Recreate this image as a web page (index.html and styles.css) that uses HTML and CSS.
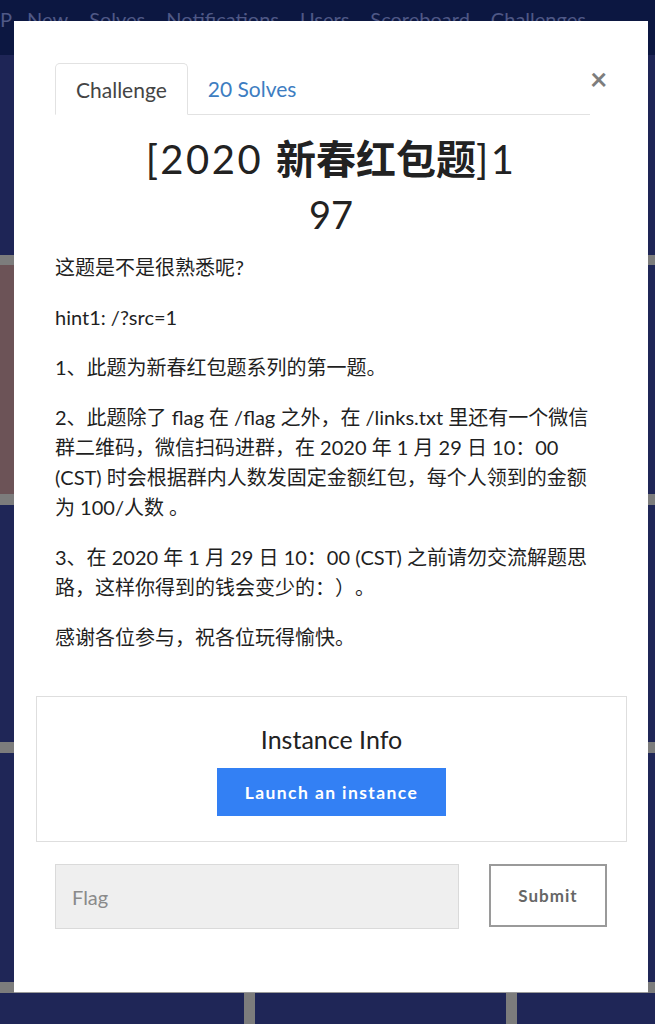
FILE: index.html
```html
<!DOCTYPE html>
<html lang="zh-CN">
<head>
<meta charset="utf-8">
<title>Challenge</title>
<link rel="stylesheet" href="styles.css">
</head>
<body>
<div class="page">
  <nav class="topnav">
    <span class="brand">P</span>
    <span class="nav-item">New</span>
    <span class="nav-item">Solves</span>
    <span class="nav-item">Notifications</span>
    <span class="nav-item">Users</span>
    <span class="nav-item">Scoreboard</span>
    <span class="nav-item">Challenges</span>
  </nav>
  <div class="hero"></div>
  <div class="cards">
    <div class="card card-solved"></div>
    <div class="card"></div>
    <div class="card"></div>
    <div class="card"></div>
    <div class="card"></div>
    <div class="card"></div>
    <div class="card"></div>
    <div class="card"></div>
    <div class="card"></div>
    <div class="card"></div>
    <div class="card"></div>
    <div class="card"></div>
  </div>
</div>

<div class="modal">
  <div class="modal-head">
    <ul class="tabs">
      <li class="tab tab-active">Challenge</li>
      <li class="tab tab-link">20 Solves</li>
    </ul>
    <span class="close">×</span>
  </div>
  <h2 class="challenge-name">[2020 <span class="cjk-bold">新春红包题</span>]1</h2>
  <h3 class="challenge-value">97</h3>
  <div class="desc">
    <p>这题是不是很熟悉呢?</p>
    <p>hint1: /?src=1</p>
    <p>1、此题为新春红包题系列的第一题。</p>
    <p>2、此题除了 flag 在 /flag 之外，在 /links.txt 里还有一个微信群二维码，微信扫码进群，在 2020 年 1 月 29 日 10：00 (CST) 时会根据群内人数发固定金额红包，每个人领到的金额为 100/人数 。</p>
    <p>3、在 2020 年 1 月 29 日 10：00 (CST) 之前请勿交流解题思路，这样你得到的钱会变少的：）。</p>
    <p>感谢各位参与，祝各位玩得愉快。</p>
  </div>
  <div class="instance">
    <div class="instance-title">Instance Info</div>
    <button class="launch">Launch an instance</button>
  </div>
  <div class="flag-row">
    <input class="flag-input" type="text" placeholder="Flag">
    <button class="submit">Submit</button>
  </div>
</div>
</body>
</html>
```

FILE: styles.css
```css
html, body {
  margin: 0;
  padding: 0;
}
body {
  width: 655px;
  height: 1024px;
  overflow: hidden;
  position: relative;
  background: #1e2556;
  font-family: "Lato", "Noto Sans CJK SC", sans-serif;
}
.page {
  width: 655px;
  overflow: hidden;
}
.topnav {
  height: 55px;
  background: #0c1741;
  display: flex;
  align-items: flex-start;
  gap: 21px;
  padding-top: 5px;
  box-sizing: border-box;
  font-size: 20px;
  line-height: 28px;
  color: #4f5886;
  white-space: nowrap;
}
.brand {
  margin-right: -6px;
}
.hero {
  height: 200px;
  background: #1e2556;
}
.cards {
  display: grid;
  grid-template-columns: 244px 251px 1fr;
  grid-template-rows: 229px 237px 229px 60px;
  gap: 11px;
  padding-top: 10px;
  background: #7c7c7c;
}
.card {
  background: #1f2657;
}
.card-solved {
  background: #6c5357;
}

.modal {
  position: absolute;
  left: 14px;
  top: 21px;
  width: 634px;
  height: 971px;
  box-sizing: border-box;
  background: #fff;
  padding: 42px 41px 0 41px;
  box-shadow: 0 1px 0 #9a9a9a;
  color: #222;
}
.modal-head {
  display: flex;
  align-items: flex-start;
}
.tabs {
  list-style: none;
  margin: 0;
  padding: 0;
  display: flex;
  width: 535px;
  height: 52px;
  border-bottom: 1px solid #e2e2e2;
  box-sizing: border-box;
}
.tab {
  padding: 0 20px;
  font-size: 21px;
  line-height: 51px;
  height: 52px;
  box-sizing: border-box;
}
.tab-active {
  color: #444;
  border: 1px solid #e2e2e2;
  border-bottom-color: #fff;
  border-radius: 5px 5px 0 0;
  padding: 0 20px;
  background: #fff;
}
.tab-link {
  color: #3d7dc1;
}
.close {
  width: 17px;
  text-align: center;
  font-size: 30px;
  line-height: 30px;
  font-weight: 700;
  color: #7d7d7d;
}
.challenge-name {
  margin: 17px 0 0;
  text-align: center;
  font-size: 40px;
  line-height: 55px;
  font-weight: 400;
  letter-spacing: 2.5px;
  color: #222;
}
.cjk-bold {
  font-weight: 700;
  letter-spacing: 0;
}
.challenge-value {
  margin: 0 0 10px;
  text-align: center;
  font-size: 38px;
  line-height: 55px;
  font-weight: 400;
  color: #222;
}
.desc {
  margin-right: 9px;
  text-spacing-trim: space-all;
}
.desc p {
  margin: 0 0 20px;
  font-size: 20px;
  line-height: 30px;
  color: #1f1f1f;
}
.instance {
  margin: 44px -20px 0 -19px;
  border: 1px solid #dedede;
  height: 146px;
  box-sizing: border-box;
  display: flex;
  flex-direction: column;
  align-items: center;
  padding-top: 27px;
}
.instance-title {
  font-size: 25px;
  line-height: 30px;
  color: #222;
}
.launch {
  margin-top: 14px;
  width: 229px;
  height: 48px;
  border: none;
  background: #3380f4;
  color: #fff;
  font-family: "Lato", sans-serif;
  font-weight: 700;
  font-size: 17.5px;
  letter-spacing: 1.4px;
}
.flag-row {
  display: flex;
  align-items: flex-start;
  gap: 30px;
  margin-top: 22px;
}
.flag-input {
  flex: 1;
  height: 65px;
  box-sizing: border-box;
  background: #efefef;
  border: 1px solid #dadada;
  padding: 0 16px;
  font-family: "Lato", sans-serif;
  font-size: 20px;
  color: #333;
  outline: none;
}
.flag-input::placeholder {
  color: #8a8a8a;
}
.submit {
  width: 118px;
  height: 63px;
  box-sizing: border-box;
  background: #fff;
  border: 2px solid #9a9a9a;
  color: #666;
  font-family: "Lato", sans-serif;
  font-weight: 700;
  font-size: 17px;
  letter-spacing: 1px;
}
```
